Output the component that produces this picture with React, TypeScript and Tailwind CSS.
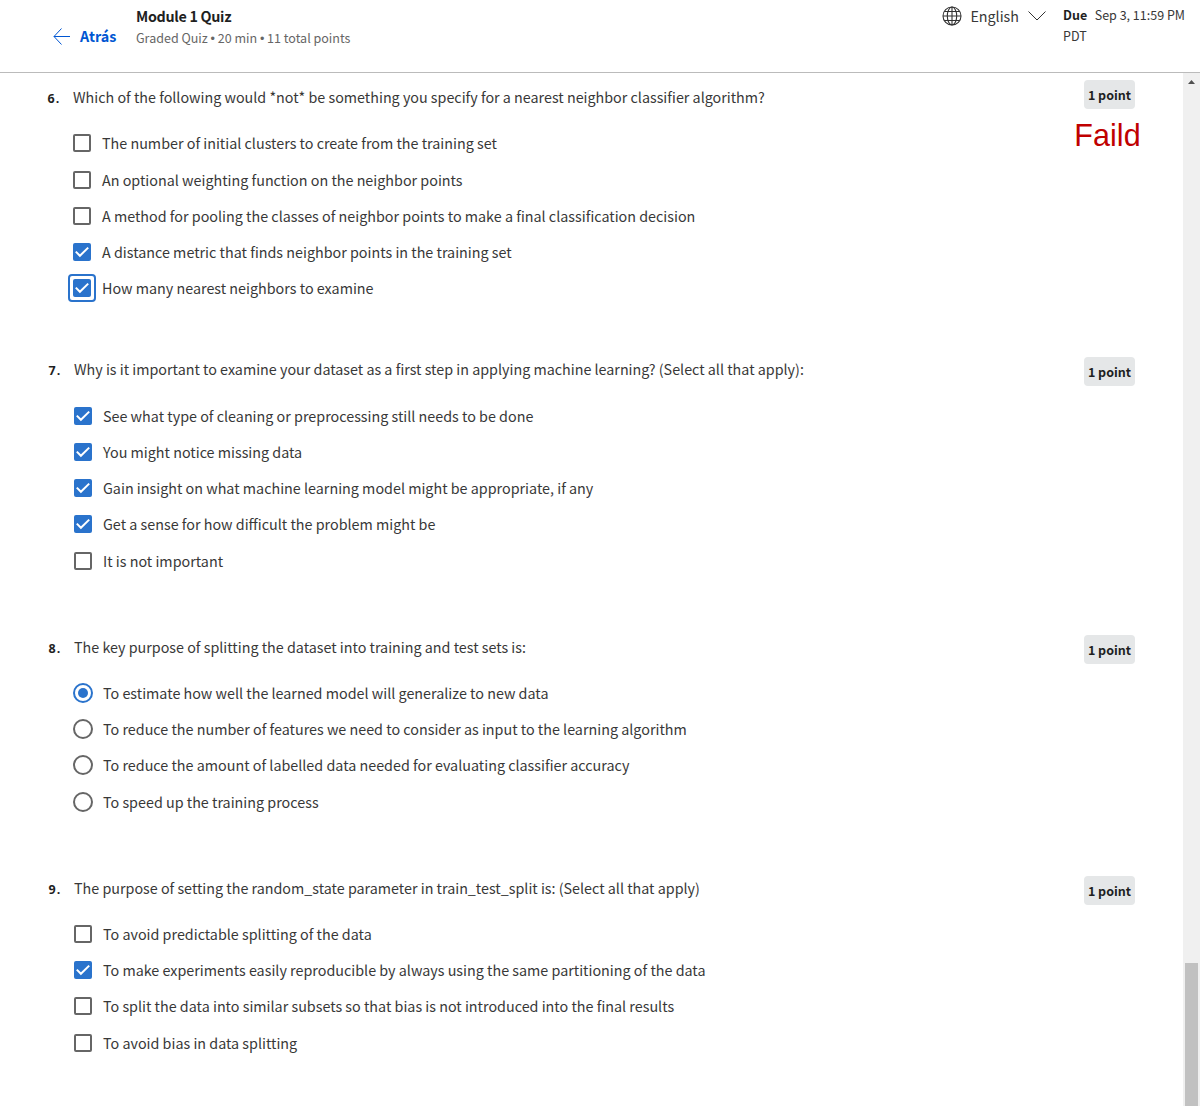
type Option = { text: string; checked?: boolean; focused?: boolean; spaced?: boolean };
type Question = {
  number: number;
  prompt: string;
  kind: 'checkbox' | 'radio';
  section: string;
  row: string;
  list: string;
  options: Option[];
};

const questions: Question[] = [
  {
    number: 6,
    kind: 'checkbox',
    prompt:
      'Which of the following would *not* be something you specify for a nearest neighbor classifier algorithm?',
    section: 'h-[277px] pl-12',
    row: 'mt-1',
    list: 'pt-3',
    options: [
      { text: 'The number of initial clusters to create from the training set' },
      { text: 'An optional weighting function on the neighbor points', spaced: true },
      {
        text: 'A method for pooling the classes of neighbor points to make a final classification decision',
      },
      { text: 'A distance metric that finds neighbor points in the training set', checked: true },
      { text: 'How many nearest neighbors to examine', checked: true, focused: true },
    ],
  },
  {
    number: 7,
    kind: 'checkbox',
    prompt:
      'Why is it important to examine your dataset as a first step in applying machine learning? (Select all that apply):',
    section: 'h-[278px] pl-[49px]',
    row: '-mt-px',
    list: 'pt-[13px]',
    options: [
      { text: 'See what type of cleaning or preprocessing still needs to be done', checked: true },
      { text: 'You might notice missing data', checked: true },
      {
        text: 'Gain insight on what machine learning model might be appropriate, if any',
        checked: true,
      },
      { text: 'Get a sense for how difficult the problem might be', checked: true },
      { text: 'It is not important', spaced: true },
    ],
  },
  {
    number: 8,
    kind: 'radio',
    prompt: 'The key purpose of splitting the dataset into training and test sets is:',
    section: 'h-[241px] pl-[49px]',
    row: '-mt-px',
    list: 'pt-3',
    options: [
      { text: 'To estimate how well the learned model will generalize to new data', checked: true },
      {
        text: 'To reduce the number of features we need to consider as input to the learning algorithm',
      },
      {
        text: 'To reduce the amount of labelled data needed for evaluating classifier accuracy',
      },
      { text: 'To speed up the training process', spaced: true },
    ],
  },
  {
    number: 9,
    kind: 'checkbox',
    prompt:
      'The purpose of setting the random_state parameter in train_test_split is: (Select all that apply)',
    section: 'h-[230px] pl-[49px]',
    row: '-mt-px',
    list: 'pt-3',
    options: [
      { text: 'To avoid predictable splitting of the data' },
      {
        text: 'To make experiments easily reproducible by always using the same partitioning of the data',
        checked: true,
      },
      {
        text: 'To split the data into similar subsets so that bias is not introduced into the final results',
      },
      { text: 'To avoid bias in data splitting', spaced: true },
    ],
  },
];

function Checkbox({ checked, focused }: { checked?: boolean; focused?: boolean }) {
  if (!checked) {
    return <span className="size-[18px] rounded-[2px] border-2 border-[#666]" />;
  }
  const box = (
    <span className="flex size-[18px] shrink-0 items-center justify-center rounded-[2px] bg-[#2a73cc]">
      <svg viewBox="0 0 18 18" className="size-[18px]" fill="none" stroke="#fff" strokeWidth="2">
        <path d="M2.8 8.6 L6.9 12.8 L15.2 4.6" />
      </svg>
    </span>
  );
  if (!focused) return box;
  return (
    <span className="flex size-7 shrink-0 items-center justify-center rounded-[4px] border-2 border-[#2a73cc]">
      {box}
    </span>
  );
}

function Radio({ checked }: { checked?: boolean }) {
  return (
    <span
      className={`flex size-5 items-center justify-center rounded-full border-2 ${
        checked ? 'border-[#2a73cc]' : 'border-[#666]'
      }`}
    >
      {checked && <span className="size-[10px] rounded-full bg-[#2a73cc]" />}
    </span>
  );
}

function QuestionBlock({ q }: { q: Question }) {
  return (
    <section className={`flex items-start justify-between pr-12 ${q.section}`}>
      <div className="flow-root">
        <div className={`flex h-[29px] items-baseline ${q.row}`}>
          <span className="-ml-[0.5px] w-[25.5px] shrink-0 font-['Open_Sans'] text-[12.5px] leading-[18px] font-bold tracking-[1px] text-[#1f1f1f]">
            {q.number}.
          </span>
          <p className="text-[14.325px] leading-[26px] whitespace-nowrap">{q.prompt}</p>
        </div>
        <ul className={q.list}>
          {q.options.map((o) => (
            <li key={o.text} className={`flex h-9 items-center ${o.spaced ? 'mt-px' : ''}`}>
              <span className="mr-[9px] ml-[23px] flex w-[22px] justify-center">
                {q.kind === 'radio' ? (
                  <Radio checked={o.checked} />
                ) : (
                  <Checkbox checked={o.checked} focused={o.focused} />
                )}
              </span>
              <span className="text-[14.33px] leading-6 whitespace-nowrap">{o.text}</span>
            </li>
          ))}
        </ul>
      </div>
      <div className="flex w-[51px] flex-col items-center">
        <span className="flex h-[29px] w-full items-center justify-center rounded-[4px] bg-[#e5e7e8] text-[12.53px] leading-[29px] font-bold whitespace-nowrap text-[#1f1f1f]">
          1 point
        </span>
        {q.number === 6 && (
          <span className="mt-2 -ml-[4px] font-['Liberation_Sans'] text-[30.5px] leading-9 tracking-[0.1px] text-[#c00000]">
            Faild
          </span>
        )}
      </div>
    </section>
  );
}

function Header() {
  return (
    <header className="flex h-[73px] items-start border-b border-[#bbb]">
      <a className="mt-[26px] ml-[53px] flex w-[83px] items-center text-[#0056d2]">
        <svg width="18" height="18" viewBox="0 0 18 18" fill="none" stroke="currentColor" className="mr-[9px]">
          <path d="M8.5 1.5 L1 9.5 L8.5 17.5 M1 9.5 H17" />
        </svg>
        <span className="text-[14.32px] leading-5 font-bold">Atrás</span>
      </a>
      <div className="flex-1">
        <h1 className="mt-[5px] text-[14.32px] leading-[21px] font-bold tracking-[-0.3px] text-[#1f1f1f]">
          Module 1 Quiz
        </h1>
        <p className="mt-px text-[12.53px] leading-[21px] text-[#666]">
          Graded Quiz <span className="font-['Liberation_Sans']">•</span> 20 min{' '}
          <span className="font-['Liberation_Sans']">•</span> 11 total points
        </p>
      </div>
      <div className="mt-[6px] flex h-5 items-center">
        <svg width="20" height="20" viewBox="0 0 20 20" fill="none" stroke="#333" strokeWidth="1.1">
          <circle cx="10" cy="10" r="9" />
          <ellipse cx="10" cy="10" rx="4.7" ry="9" />
          <path d="M10 1 V19 M1 10 H19 M2.6 5.5 H17.4 M2.6 14.5 H17.4" />
        </svg>
        <span className="ml-2 text-[14.32px] leading-5">English</span>
        <svg width="18" height="10" viewBox="0 0 18 10" fill="none" stroke="#333" className="ml-[9px]">
          <path d="M0.5 0.5 L9 9 L17.5 0.5" />
        </svg>
      </div>
      <div className="mt-1 mr-[7px] ml-[17px] w-[130px] text-[12.53px] leading-[21px] whitespace-nowrap">
        <div className="flex gap-[7.5px]">
          <b className="font-bold text-[#1f1f1f]">Due</b>
          <span>Sep 3, 11:59 PM</span>
        </div>
        <div>PDT</div>
      </div>
    </header>
  );
}

export default function App() {
  return (
    <div className="flex h-[1106px] w-[1200px] flex-col overflow-hidden bg-white font-['Noto_Sans_CJK_SC',sans-serif] text-[#383838]">
      <Header />
      <div className="flex min-h-0 flex-1">
        <main className="flex-1 pt-[7px]">
          {questions.map((q) => (
            <QuestionBlock key={q.number} q={q} />
          ))}
        </main>
        <div className="flex w-[17px] flex-col items-center bg-[#f0f0f0]">
          <svg width="7" height="4" viewBox="0 0 7 4" className="mt-[7px]" fill="#505050">
            <path d="M3.5 0 L7 4 H0 Z" />
          </svg>
          <div className="mt-auto mr-px h-[143px] w-[13px] bg-[#c1c1c1]" />
        </div>
      </div>
    </div>
  );
}
